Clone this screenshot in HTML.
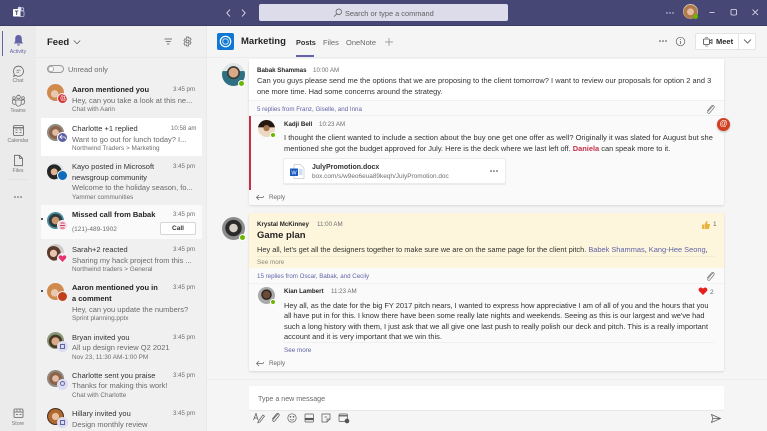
<!DOCTYPE html>
<html><head><meta charset="utf-8"><style>
*{box-sizing:border-box}
html,body{margin:0;padding:0;width:767px;height:431px;overflow:hidden;background:#f5f5f5;font-family:"Liberation Sans",sans-serif;color:#333}
#w{left:0;top:0;width:767px;height:431px;overflow:hidden;filter:blur(.3px)}
div,svg,span.a{position:absolute}
.t{white-space:nowrap;font-size:7.500px;line-height:10px;color:#333}
.b{font-weight:bold;color:#252423}
.g{color:#6a6a6a}
.s{font-size:6.400px;color:#6e6e6e}
.m{font-size:6.100px;color:#6e6e6e}
.x{font-size:7.450px}
.r{font-size:5.200px;color:#777;text-align:center;width:36px;left:0}
.l{color:#6264a7}
.av{border-radius:50%;width:17px;height:17px;overflow:hidden}
.bd{border-radius:50%;width:11px;height:11px}
.st{border-radius:50%;width:6px;height:6px;background:#6bb700;border:1px solid #fff}
</style></head><body><div id="w">
<!-- title bar -->
<div style="left:0;top:0;width:767px;height:25px;background:#464775"></div>
<div style="left:0;top:25px;width:767px;height:1px;background:#3b3c63"></div>
<svg style="left:12px;top:6px" width="13" height="13" viewBox="0 0 13 13"><circle cx="10.300" cy="3.200" r="1.500" fill="none" stroke="#c5c6e6" stroke-width=".8"/><circle cx="7.500" cy="2.500" r="1.700" fill="#dfe0f2"/><rect x="7" y="5" width="5" height="5.500" rx="1" fill="none" stroke="#c5c6e6" stroke-width=".8"/><rect x="1" y="3" width="7.500" height="7.500" rx=".6" fill="#fff"/><path d="M3 5h3.400M4.700 5v4" stroke="#464775" stroke-width="1"/></svg>
<svg style="left:225px;top:8px" width="24" height="10" viewBox="0 0 24 10"><path d="M5 1.500 1.800 5 5 8.500M17 1.500l3.200 3.500-3.200 3.500" fill="none" stroke="#e6e6f2" stroke-width=".9"/></svg>
<div style="left:259px;top:4px;width:249px;height:17px;background:#dcdcea;border-radius:2px"></div>
<svg style="left:333px;top:8px" width="10" height="10" viewBox="0 0 10 10"><circle cx="5.800" cy="3.800" r="2.800" fill="none" stroke="#555" stroke-width=".7"/><path d="M3.700 5.900 1 8.600" stroke="#555" stroke-width=".7"/></svg>
<div class="t" style="left:345px;top:9px;color:#616161;font-size:7.400px">Search or type a command</div>
<svg style="left:665px;top:11px" width="10" height="4" viewBox="0 0 10 4"><circle cx="2" cy="2" r=".7" fill="#e6e6f2"/><circle cx="5" cy="2" r=".7" fill="#e6e6f2"/><circle cx="8" cy="2" r=".7" fill="#e6e6f2"/></svg>
<div class="av" style="left:683px;top:4px;width:15px;height:15px;background:radial-gradient(circle at 50% 52%,#e3bb9f 0 30%,#b07a4a 33% 62%,#d4c4b2 65%)"></div>
<div class="st" style="left:693px;top:14px;width:5px;height:5px;border:0"></div>
<svg style="left:705px;top:7px" width="62" height="12" viewBox="0 0 62 12"><path d="M4.500 5.500h5" stroke="#e6e6f2" stroke-width=".8"/><rect x="26" y="2.500" width="5.500" height="5.500" rx="1" fill="none" stroke="#e6e6f2" stroke-width=".8"/><path d="M47.500 2.500l5.500 5.500M53 2.500 47.500 8" stroke="#e6e6f2" stroke-width=".8"/></svg>

<!-- left rail -->
<div style="left:0;top:26px;width:36px;height:405px;background:#ebebeb"></div>
<div style="left:2px;top:31px;width:1px;height:25px;background:#6264a7"></div>
<svg style="left:12px;top:34px" width="13" height="13" viewBox="0 0 13 13"><path d="M6.500 1C4.200 1 3.200 2.700 3.200 4.800v2.600L2 9.500h9L9.800 7.400V4.800C9.800 2.700 8.800 1 6.500 1zM5 10.400c.3.900.8 1.300 1.500 1.300s1.200-.4 1.500-1.300z" fill="#6264a7"/></svg>
<div class="t r" style="top:47px;color:#6264a7">Activity</div>
<svg style="left:12px;top:65px" width="13" height="13" viewBox="0 0 13 13"><path d="M6.500 1.200a5 5 0 1 1-2.600 9.300L1.600 11.300l.8-2.200a5 5 0 0 1 4.100-7.900z" fill="none" stroke="#616161" stroke-width=".8"/><path d="M4.500 5.200h4M4.500 7.200h2.600" stroke="#616161" stroke-width=".7"/></svg>
<div class="t r" style="top:76px">Chat</div>
<svg style="left:11px;top:94px" width="15" height="13" viewBox="0 0 15 13"><circle cx="7.500" cy="3" r="1.800" fill="none" stroke="#616161" stroke-width=".8"/><circle cx="3" cy="4" r="1.300" fill="none" stroke="#616161" stroke-width=".7"/><circle cx="12" cy="4" r="1.300" fill="none" stroke="#616161" stroke-width=".7"/><path d="M4.800 6h5.400v3.500a2.700 2.700 0 0 1-5.400 0zM4.500 6H1.500v2.300c0 1.500 1.300 2.200 2.900 2M10.500 6h3v2.300c0 1.500-1.300 2.200-2.900 2" fill="none" stroke="#616161" stroke-width=".7"/></svg>
<div class="t r" style="top:106px">Teams</div>
<svg style="left:12px;top:124px" width="13" height="13" viewBox="0 0 13 13"><rect x="1.500" y="1.500" width="10" height="10" rx="1.200" fill="none" stroke="#616161" stroke-width=".8"/><path d="M1.500 3.800h10" stroke="#616161" stroke-width="1.200"/><path d="M3.500 6h2M7.500 6h2M3.500 8.500h2M7.500 8.500h2" stroke="#616161" stroke-width=".8"/></svg>
<div class="t r" style="top:136px">Calendar</div>
<svg style="left:12px;top:154px" width="13" height="13" viewBox="0 0 13 13"><path d="M2.500 1.300h5l3 3v7.400h-8zM7.500 1.300v3h3" fill="none" stroke="#616161" stroke-width=".8"/></svg>
<div class="t r" style="top:166px">Files</div>
<div style="left:8px;top:179px;width:20px;height:1px;background:#e2e2e2"></div>
<svg style="left:13px;top:195px" width="10" height="4" viewBox="0 0 10 4"><circle cx="2" cy="2" r=".8" fill="#555"/><circle cx="5" cy="2" r=".8" fill="#555"/><circle cx="8" cy="2" r=".8" fill="#555"/></svg>
<svg style="left:12px;top:407px" width="13" height="12" viewBox="0 0 13 12"><rect x="2" y="2" width="9" height="8.500" rx="1" fill="none" stroke="#616161" stroke-width=".8"/><path d="M2 5h9M5 2.500v2M8 2.500v2M4 7.500h2M7.500 7.500h2" stroke="#616161" stroke-width=".7"/></svg>
<div class="t r" style="top:419px">Store</div>

<!-- feed list -->
<div style="left:36px;top:26px;width:170px;height:405px;background:#f0f0f0"></div>
<div style="left:36px;top:57px;width:170px;height:1px;background:#e8e8e8"></div>
<div class="t" style="left:47px;top:37px;font-size:9.500px;line-height:11px;font-weight:bold;color:#252423">Feed</div>
<svg style="left:73px;top:39px" width="8" height="7" viewBox="0 0 8 7"><path d="M.8 1.500 4 4.800l3.200-3.300" fill="none" stroke="#555" stroke-width=".7"/></svg>
<svg style="left:163px;top:37px" width="11" height="10" viewBox="0 0 11 10"><path d="M1.500 2h7.500M2.800 4.500h5M4 7h2.500" stroke="#555" stroke-width=".8"/></svg>
<svg style="left:182px;top:36px" width="11" height="11" viewBox="0 0 11 11"><circle cx="5.500" cy="5.500" r="1.500" fill="none" stroke="#616161" stroke-width=".7"/><path d="M4.500 1h2l.3 1.300 1.300-.5 1 1.700-1 .9v1.200l1 .9-1 1.700-1.300-.5L6.500 10h-2l-.3-1.300-1.300.5-1-1.700 1-.9V5.400l-1-.9 1-1.700 1.300.5z" fill="none" stroke="#616161" stroke-width=".7"/></svg>
<div style="left:47px;top:65px;width:17px;height:8px;border:.8px solid #999;border-radius:4px"></div>
<div style="left:48px;top:66px;width:6px;height:6px;background:#fff;border:.8px solid #aaa;border-radius:50%"></div>
<div class="t g" style="left:68px;top:65px;font-size:7.400px">Unread only</div>

<div style="left:41px;top:118px;width:161px;height:38px;background:#fff;border-radius:1px"></div>
<div style="left:41px;top:205px;width:161px;height:34px;background:#fafafa;border-radius:1px"></div>

<!-- item1 -->
<div class="av" style="left:47px;top:84px;background:radial-gradient(circle at 45% 58%,#e8c8b0 0 26%,#d08a4e 29% 100%)"></div>
<div class="bd" style="left:57px;top:93px;background:#d13438;border:1px solid #f0f0f0"></div>
<div class="t" style="left:60px;top:94px;font-size:7px;line-height:9px;color:#fff">@</div>
<div class="t b" style="left:72px;top:85px">Aaron mentioned you</div>
<div class="t m" style="left:173px;top:85px">3:45 pm</div>
<div class="t g" style="left:72px;top:96px">Hey, can you take a look at this ne...</div>
<div class="t s" style="left:72px;top:105px">Chat with Aarin</div>
<!-- item2 -->
<div class="av" style="left:47px;top:124px;background:radial-gradient(circle at 50% 50%,#e2bda6 0 26%,#8d6248 29% 52%,#8f8a80 55%)"></div>
<div class="bd" style="left:57px;top:132px;background:#5b5fa8;border:1px solid #fff"></div>
<svg style="left:59px;top:134px" width="8" height="7" viewBox="0 0 8 7"><path d="M3 1 1 3l2 2M1 3h4c1 0 1.500.8 1.500 2" fill="none" stroke="#fff" stroke-width=".8"/></svg>
<div class="t" style="left:72px;top:124px;color:#333">Charlotte +1 replied</div>
<div class="t m" style="left:171px;top:124px">10:58 am</div>
<div class="t g" style="left:72px;top:135px">Want to go out for lunch today? I...</div>
<div class="t s" style="left:72px;top:144px">Northwind Traders &gt; Marketing</div>
<!-- item3 -->
<div class="av" style="left:47px;top:163px;background:radial-gradient(circle at 42% 52%,#e0b595 0 24%,#262626 27% 55%,#d8e4ea 58%)"></div>
<div class="bd" style="left:57px;top:170px;background:#0f6cbd;border:1px solid #f0f0f0"></div>
<div class="t" style="left:72px;top:162px;color:#333">Kayo posted in Microsoft</div>
<div class="t" style="left:72px;top:173px;color:#333">newsgroup community</div>
<div class="t m" style="left:173px;top:162px">3:45 pm</div>
<div class="t g" style="left:72px;top:183px">Welcome to the holiday season, fo...</div>
<div class="t s" style="left:72px;top:193px">Yammer communities</div>
<!-- item4 -->
<div style="left:41px;top:218px;width:2px;height:2px;border-radius:50%;background:#252423"></div>
<div class="av" style="left:47px;top:212px;background:radial-gradient(circle at 50% 50%,#c9966f 0 30%,#2e3a3e 33% 55%,#4a90a4 58%)"></div>
<div class="bd" style="left:57px;top:220px;background:#f4d7d9;border:1px solid #fafafa"></div>
<svg style="left:59px;top:222px" width="7" height="7" viewBox="0 0 7 7"><path d="M1.500 1h4M1 3.500h5M1.500 6h4" stroke="#d13c6f" stroke-width="1"/></svg>
<div class="t b" style="left:72px;top:210px">Missed call from Babak</div>
<div class="t m" style="left:173px;top:210px">3:45 pm</div>
<div class="t s" style="left:72px;top:225px;font-size:6.500px">(121)-489-1902</div>
<div style="left:160px;top:222px;width:36px;height:13px;background:#fff;border:.8px solid #d6d6d6;border-radius:2px"></div>
<div class="t" style="left:160px;top:224px;width:36px;text-align:center;font-weight:bold;font-size:6.500px">Call</div>
<!-- item5 -->
<div class="av" style="left:47px;top:244px;background:radial-gradient(circle at 38% 55%,#e8c4ac 0 24%,#5a3a2c 27% 50%,#cfcbc6 53%)"></div>
<div class="bd" style="left:57px;top:253px;background:#f3f3f3"></div>
<svg style="left:58px;top:254px" width="9" height="9" viewBox="0 0 9 9"><path d="M4.500 8 1 4.300C.2 3 1 1.300 2.500 1.300c1 0 1.600.5 2 1.200.4-.7 1-1.200 2-1.200C8 1.300 8.800 3 8 4.300z" fill="#e8316f"/></svg>
<div class="t" style="left:72px;top:245px;color:#333">Sarah+2 reacted</div>
<div class="t m" style="left:173px;top:245px">3:45 pm</div>
<div class="t g" style="left:72px;top:256px">Sharing my hack project from this ...</div>
<div class="t s" style="left:72px;top:265px">Northwind traders &gt; General</div>
<!-- item6 -->
<div style="left:41px;top:290px;width:2px;height:2px;border-radius:50%;background:#252423"></div>
<div class="av" style="left:47px;top:283px;background:radial-gradient(circle at 45% 58%,#e8c8b0 0 26%,#d08a4e 29% 100%)"></div>
<div class="bd" style="left:57px;top:291px;background:#c43e1c;border:1px solid #f0f0f0"></div>
<div class="t b" style="left:72px;top:283px">Aaron mentioned you in</div>
<div class="t b" style="left:72px;top:294px">a comment</div>
<div class="t m" style="left:173px;top:283px">3:45 pm</div>
<div class="t g" style="left:72px;top:305px">Hey, can you update the numbers?</div>
<div class="t s" style="left:72px;top:314px">Sprint planning.pptx</div>
<!-- item7 -->
<div class="av" style="left:47px;top:332px;background:radial-gradient(circle at 50% 55%,#d9aa85 0 30%,#4a3a2a 33% 52%,#8a9a7a 55%)"></div>
<div class="bd" style="left:57px;top:341px;background:#dcdcf0"></div>
<div style="left:60px;top:344px;width:5px;height:5px;border:.7px solid #6264a7"></div>
<div class="t" style="left:72px;top:333px;color:#333">Bryan invited you</div>
<div class="t m" style="left:173px;top:333px">3:45 pm</div>
<div class="t g" style="left:72px;top:343px">All up design review Q2 2021</div>
<div class="t s" style="left:72px;top:353px">Nov 23, 11:30 AM-1:00 PM</div>
<!-- item8 -->
<div class="av" style="left:47px;top:370px;background:radial-gradient(circle at 50% 50%,#e2bda6 0 26%,#8d6248 29% 52%,#8f8a80 55%)"></div>
<div class="bd" style="left:57px;top:379px;background:#dcdcf0"></div>
<div style="left:60px;top:381px;width:5px;height:5px;border:.7px solid #6264a7;border-radius:50%"></div>
<div class="t" style="left:72px;top:371px;color:#333">Charlotte sent you praise</div>
<div class="t m" style="left:173px;top:371px">3:45 pm</div>
<div class="t g" style="left:72px;top:381px">Thanks for making this work!</div>
<div class="t s" style="left:72px;top:391px">Chat with Charlotte</div>
<!-- item9 -->
<div class="av" style="left:47px;top:408px;background:radial-gradient(circle at 50% 50%,#e8c0a0 0 28%,#b06a30 31% 60%,#4a3020 63%)"></div>
<div class="bd" style="left:57px;top:417px;background:#dcdcf0"></div>
<div style="left:60px;top:420px;width:5px;height:5px;border:.7px solid #6264a7"></div>
<div class="t" style="left:72px;top:409px;color:#333">Hillary invited you</div>
<div class="t m" style="left:173px;top:409px">3:45 pm</div>
<div class="t g" style="left:72px;top:420px">Design monthly review</div>
<div style="left:206px;top:26px;width:1px;height:405px;background:#e9e9e9"></div>

<!-- channel header -->
<div style="left:207px;top:57px;width:560px;height:1px;background:#ececec"></div>
<div style="left:217px;top:33px;width:17px;height:17px;background:#0f78d4;border-radius:2px"></div>
<svg style="left:217px;top:33px" width="17" height="17" viewBox="0 0 17 17"><circle cx="8.500" cy="8.500" r="5.200" fill="none" stroke="#fff" stroke-width="1.200"/><circle cx="8.500" cy="8.500" r="2.800" fill="none" stroke="#bfe0f7" stroke-width="1"/></svg>
<div class="t" style="left:241px;top:36px;font-size:9.500px;line-height:11px;font-weight:bold;color:#252423">Marketing</div>
<div class="t" style="left:296px;top:38px;font-size:7.300px;font-weight:bold;color:#333">Posts</div>
<div style="left:296px;top:55px;width:18px;height:2px;background:#6264a7"></div>
<div class="t g" style="left:323px;top:38px;font-size:7.500px">Files</div>
<div class="t g" style="left:346px;top:38px;font-size:7.500px">OneNote</div>
<svg style="left:384px;top:37px" width="10" height="10" viewBox="0 0 10 10"><path d="M5 1v8M1 5h8" stroke="#888" stroke-width=".7"/></svg>
<svg style="left:658px;top:39px" width="10" height="4" viewBox="0 0 10 4"><circle cx="2" cy="2" r=".8" fill="#444"/><circle cx="5" cy="2" r=".8" fill="#444"/><circle cx="8" cy="2" r=".8" fill="#444"/></svg>
<svg style="left:675px;top:36px" width="11" height="11" viewBox="0 0 11 11"><circle cx="5.500" cy="5.500" r="4.300" fill="none" stroke="#666" stroke-width=".7"/><path d="M5.500 5v3" stroke="#666" stroke-width=".8"/><circle cx="5.500" cy="3.400" r=".5" fill="#666"/></svg>
<div style="left:695px;top:33px;width:61px;height:17px;background:#fff;border:.8px solid #e4e4e4;border-radius:2px"></div>
<div style="left:738px;top:33px;width:1px;height:17px;background:#e4e4e4"></div>
<svg style="left:702px;top:36px" width="11" height="11" viewBox="0 0 11 11"><rect x="1.500" y="3" width="6" height="5.500" rx="1" fill="none" stroke="#444" stroke-width=".8"/><path d="M7.500 5 10 3.500v4L7.500 6" fill="none" stroke="#444" stroke-width=".8"/><path d="M3 1.500h3M3 10h3" stroke="#444" stroke-width=".6"/></svg>
<div class="t" style="left:716px;top:37px;font-weight:bold;font-size:7.500px;color:#252423">Meet</div>
<svg style="left:743px;top:38px" width="9" height="7" viewBox="0 0 9 7"><path d="M1 1.500 4.500 5 8 1.500" fill="none" stroke="#444" stroke-width=".8"/></svg>

<!-- card 1 -->
<div style="left:249px;top:59px;width:475px;height:146px;background:#fafafa;border-radius:2px;box-shadow:0 1px 2px rgba(0,0,0,.13)"></div>
<div style="left:249px;top:59px;width:475px;height:42px;background:#fff;border-bottom:1px solid #f0f0f0"></div>
<div style="left:249px;top:101px;width:475px;height:15px;background:#fafafa;border-bottom:1px solid #f0f0f0"></div>
<div style="left:249px;top:116px;width:2px;height:74px;background:#c4314b"></div>
<div class="av" style="left:222px;top:63px;width:23px;height:23px;background:radial-gradient(circle at 50% 42%,#d9a98a 0 26%,#3a3a34 29% 36%,transparent 38%),linear-gradient(#dfe6e8 0 35%,#2e6f82 36% 100%)"></div>
<div class="st" style="left:238px;top:80px;width:7px;height:7px"></div>
<div class="t b" style="left:257px;top:66px;font-size:6.200px">Babak Shammas</div>
<div class="t m" style="left:313px;top:66px;font-size:6.200px">10:00 AM</div>
<div class="t x" style="left:257px;top:76px;letter-spacing:.03px">Can you guys please send me the options that we are proposing to the client tomorrow? I want to review our proposals for option 2 and 3</div>
<div class="t x" style="left:257px;top:87px">one more time. Had some concerns around the strategy.</div>
<div class="t l" style="left:257px;top:105px;font-size:6.200px">5 replies from Franz, Giselle, and Inna</div>
<svg style="left:705px;top:104px" width="10" height="11" viewBox="0 0 10 11"><path d="M7.800 2 3 7.500c-1 1.300.6 2.600 1.700 1.500L8.800 4c1.300-1.700-1-3.500-2.400-2L2.300 7" fill="none" stroke="#777" stroke-width=".7"/></svg>
<div class="av" style="left:258px;top:120px;background:radial-gradient(circle at 50% 48%,#a8724c 0 24%,transparent 26%),linear-gradient(#241810 0 42%,#ecd9c4 44% 100%)"></div>
<div class="st" style="left:270px;top:132px;width:6px;height:6px"></div>
<div class="t b" style="left:284px;top:120px;font-size:6.200px">Kadji Bell</div>
<div class="t m" style="left:319px;top:120px;font-size:6.200px">10:23 AM</div>
<div class="t x" style="left:284px;top:133px;letter-spacing:.03px">I thought the client wanted to include a section about the buy one get one offer as well? Originally it was slated for August but she</div>
<div class="t x" style="left:284px;top:144px">mentioned she got the budget approved for July. Here is the deck where we last left off. <b style="color:#c4314b">Daniela</b> can speak more to it.</div>
<div class="a" style="left:717px;top:118px;width:13px;height:13px;border-radius:50%;background:#d13f1f;box-shadow:0 1px 2px rgba(0,0,0,.25)"></div>
<div class="t" style="left:717px;top:119px;width:13px;text-align:center;color:#fff;font-size:8px">@</div>
<div style="left:283px;top:158px;width:223px;height:26px;background:#fff;border:.8px solid #ececec;border-radius:2px;box-shadow:0 1px 1px rgba(0,0,0,.07)"></div>
<svg style="left:289px;top:163px" width="17" height="17" viewBox="0 0 17 17"><path d="M5 1.500h6.500l3.500 3.500v10.500H5z" fill="#fff" stroke="#c8c8c8" stroke-width=".7"/><path d="M10 7h3.500M10 9h3.500M10 11h3.500" stroke="#7aa6dc" stroke-width=".8"/><rect x="1" y="5.500" width="8" height="7.500" rx=".6" fill="#185abd"/><text x="5" y="11.500" font-size="5.500" fill="#fff" text-anchor="middle" font-family="Liberation Sans">W</text></svg>
<div class="t" style="left:312px;top:163px;font-size:7px;font-weight:bold;color:#333">JulyPromotion.docx</div>
<div class="t s" style="left:312px;top:172px;font-size:6.450px">box.com/s/w9eo6eua89keqh/JulyPromotion.doc</div>
<svg style="left:489px;top:169px" width="10" height="4" viewBox="0 0 10 4"><circle cx="2" cy="2" r=".8" fill="#333"/><circle cx="5" cy="2" r=".8" fill="#333"/><circle cx="8" cy="2" r=".8" fill="#333"/></svg>
<svg style="left:255px;top:193px" width="11" height="9" viewBox="0 0 11 9"><path d="M4 2 1.500 4.500 4 7M1.500 4.500h6c.8 0 1-.5 1-1.500" fill="none" stroke="#666" stroke-width=".7"/></svg>
<div class="t g" style="left:269px;top:193px;font-size:6.300px">Reply</div>

<!-- card 2 -->
<div style="left:249px;top:213px;width:475px;height:158px;background:#fafafa;border-radius:2px;box-shadow:0 1px 2px rgba(0,0,0,.13)"></div>
<div style="left:249px;top:213px;width:475px;height:55px;background:#fdf6dd"></div>
<div style="left:257px;top:256px;width:458px;height:1px;background:#f2ecd2"></div>
<div style="left:249px;top:283px;width:475px;height:1px;background:#f2f2f2"></div>
<div class="av" style="left:222px;top:217px;width:23px;height:23px;background:radial-gradient(circle at 50% 48%,#d8cfc6 0 24%,#2a2a2a 27% 48%,#8c8c8c 51%)"></div>
<div class="st" style="left:239px;top:234px;width:7px;height:7px"></div>
<div class="t b" style="left:257px;top:220px;font-size:6.200px">Krystal McKinney</div>
<div class="t m" style="left:317px;top:220px;font-size:6.200px">11:00 AM</div>
<div class="t" style="left:257px;top:230px;font-size:9.500px;line-height:12px;font-weight:bold;color:#252423">Game plan</div>
<div class="t x" style="left:257px;top:245px;letter-spacing:-.02px">Hey all, let's get all the designers together to make sure we are on the same page for the client pitch. <span class="l">Babek Shammas</span>, <span class="l">Kang-Hee Seong</span>,</div>
<div class="t s" style="left:257px;top:258px;font-size:6.300px;color:#8a8a78">See more</div>
<svg style="left:701px;top:220px" width="10" height="10" viewBox="0 0 10 10"><path d="M1 4.500h2v4.500H1zM3.500 4.500 5.500 1c1 0 1.300.8 1 1.500L6 4h3l-1 5H3.500z" fill="#eab23f"/></svg>
<div class="t g" style="left:713px;top:220px;font-size:6.500px">1</div>
<div class="t l" style="left:257px;top:272px;font-size:6.200px">15 replies from Oscar, Babak, and Cecily</div>
<svg style="left:705px;top:271px" width="10" height="11" viewBox="0 0 10 11"><path d="M7.800 2 3 7.500c-1 1.300.6 2.600 1.700 1.500L8.800 4c1.300-1.700-1-3.500-2.400-2L2.300 7" fill="none" stroke="#777" stroke-width=".7"/></svg>
<div class="av" style="left:258px;top:287px;background:radial-gradient(circle at 50% 45%,#6b4a38 0 28%,#2e2622 31% 40%,#a9a9a9 43%)"></div>
<div class="st" style="left:270px;top:299px;width:6px;height:6px"></div>
<div class="t b" style="left:284px;top:287px;font-size:6.200px">Kian Lambert</div>
<div class="t m" style="left:331px;top:287px;font-size:6.200px">11:23 AM</div>
<svg style="left:698px;top:286px" width="10" height="10" viewBox="0 0 10 10"><path d="M5 9 1 5C0 3.500 1 1.500 2.800 1.500c1 0 1.700.5 2.200 1.200.5-.7 1.200-1.200 2.200-1.200C9 1.500 10 3.500 9 5z" fill="#e81f1f"/></svg>
<div class="t g" style="left:710px;top:288px;font-size:6.500px">2</div>
<div class="t x" style="left:284px;top:301px;letter-spacing:-.015px">Hey all, as the date for the big FY 2017 pitch nears, I wanted to express how appreciative I am of all of you and the hours that you</div>
<div class="t x" style="left:284px;top:311px;letter-spacing:-.02px">all have put in for this. I know there have been some really late nights and weekends. Seeing as this is our largest and we've had</div>
<div class="t x" style="left:284px;top:322px">such a long history with them, I just ask that we all give one last push to really polish our deck and pitch. This is a really important</div>
<div class="t x" style="left:284px;top:332px">account and it is very important that we win this.</div>
<div style="left:284px;top:342px;width:431px;height:1px;background:#f0f0f0"></div>
<div class="t l" style="left:284px;top:346px;font-size:6.300px">See more</div>
<svg style="left:255px;top:359px" width="11" height="9" viewBox="0 0 11 9"><path d="M4 2 1.500 4.500 4 7M1.500 4.500h6c.8 0 1-.5 1-1.500" fill="none" stroke="#666" stroke-width=".7"/></svg>
<div class="t g" style="left:269px;top:359px;font-size:6.300px">Reply</div>

<!-- composer -->
<div style="left:207px;top:379px;width:560px;height:1px;background:#eeeeee"></div>
<div style="left:249px;top:386px;width:475px;height:24px;background:#fff;border-radius:2px;box-shadow:0 1px 1px rgba(0,0,0,.06)"></div>
<div class="t g" style="left:258px;top:394px;font-size:7.100px">Type a new message</div>
<svg style="left:252px;top:411px" width="100" height="14" viewBox="0 0 100 14" fill="none" stroke="#555" stroke-width=".7">
<path d="M1.500 9 4 2.500 6 9M2.500 7h3M6.500 10 11 4l1.500 1.200L8 11l-2.200.8z"/>
<path d="M25.800 3 21 8.500c-1 1.300.6 2.600 1.700 1.500L26.800 5c1.300-1.700-1-3.500-2.400-2L20.300 8"/>
<circle cx="40" cy="7" r="4.200"/><circle cx="38.500" cy="5.800" r=".5" fill="#555"/><circle cx="41.500" cy="5.800" r=".5" fill="#555"/><path d="M38 8.200c1 1.200 3 1.200 4 0"/>
<rect x="53" y="3" width="8.500" height="8" rx=".8"/><path d="M53 8h8.500" stroke-width="2.200"/>
<path d="M70 3h8v5l-3 3h-5zM75 11V8h3M72.500 6h2.500"/>
<rect x="87" y="3" width="8.500" height="7.500" rx=".8"/><path d="M87 4.800h8.500" stroke-width="1.200"/><circle cx="95" cy="10" r="2" fill="#555"/>
</svg>
<svg style="left:710px;top:413px" width="12" height="11" viewBox="0 0 12 11"><path d="M1.500 1.500 10.500 5.500 1.500 9.500 2.800 5.500zM2.800 5.500h7.700" fill="none" stroke="#555" stroke-width=".7"/></svg>
</div></body></html>
